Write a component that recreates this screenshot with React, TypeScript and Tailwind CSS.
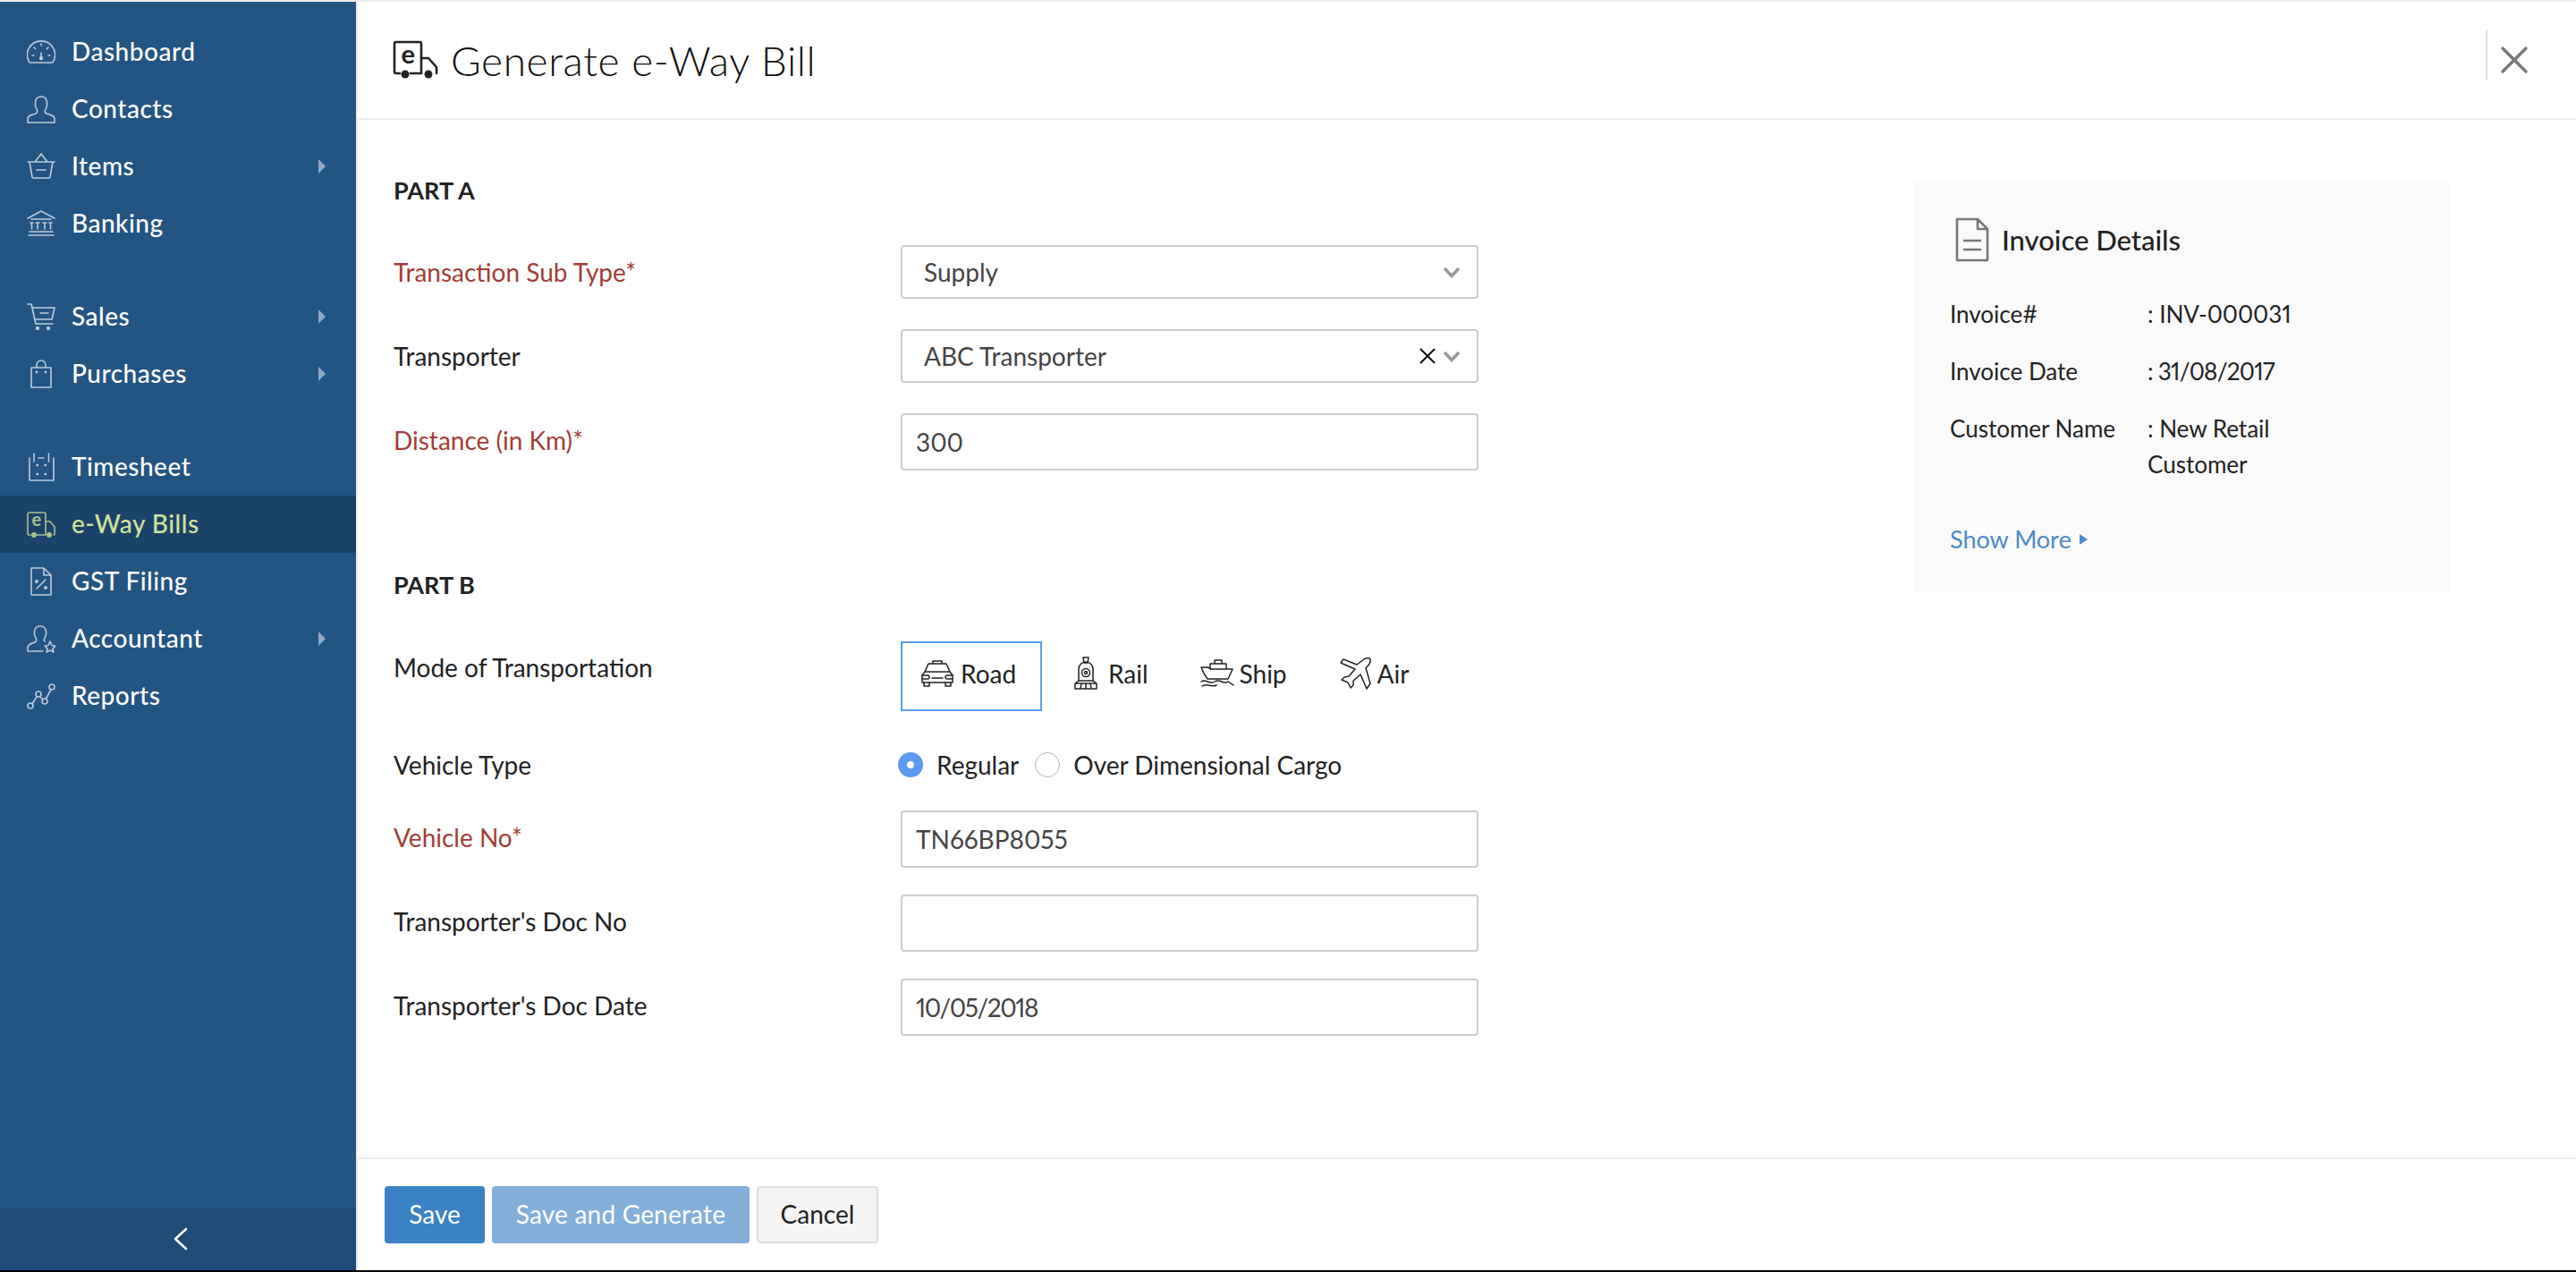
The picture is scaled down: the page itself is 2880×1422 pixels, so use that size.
import type { ReactNode } from "react";

const sb = { fill: "none", stroke: "currentColor", strokeWidth: 1.6, strokeLinecap: "round", strokeLinejoin: "round" } as const;

function Svg({ w = 32, h = 32, className = "", children }: { w?: number; h?: number; className?: string; children: ReactNode }) {
    return (
        <svg width={w} height={h} viewBox={`0 0 ${w} ${h}`} className={className} {...sb}>
            {children}
        </svg>
    );
}

const navIcons: Record<string, ReactNode> = {
    Dashboard: (
        <Svg>
            <path d="M4 28 a2 2 0 0 1 -1.5 -1 a15.5 15.5 0 1 1 27 0 a2 2 0 0 1 -1.5 1 Z" />
            <path d="M16 17 V23 M16 7 V9 M8 11 L9.5 12.5 M24 11 L22.5 12.5 M6 20 H8 M24 20 H26" />
            <circle cx="16" cy="23" r="1.4" fill="currentColor" />
        </Svg>
    ),
    Contacts: (
        <Svg>
            <path d="M1 31 V27 C1 23 6 22 10 21 C12 20 12 18 11 16 C9 13 9 10 10 6 C11 3 13 2 16 2 C19 2 21 3 22 6 C23 10 23 13 21 16 C20 18 20 20 22 21 C26 22 31 23 31 27 V31 Z" />
        </Svg>
    ),
    Items: (
        <Svg>
            <path d="M1 11 H31 M3 11 L6 28 a2 2 0 0 0 2 1 H24 a2 2 0 0 0 2 -1 L29 11 M9 11 L16 2 L23 11 M11 20 H21" />
        </Svg>
    ),
    Banking: (
        <Svg>
            <path d="M1 10 L16 2 L31 10 M5 11 H27 M10 15 H14 M12 15 V22 M18 15 H22 M20 15 V22 M4 15 H7 M5.5 15 V22 M25 15 H28 M26.5 15 V22 M3 25 H29 M2 29 H30" />
        </Svg>
    ),
    Sales: (
        <Svg>
            <path d="M1 2 H5 L10 24 H29 M6 6 H31 L28 19 H9 M15 12 H24" />
            <circle cx="12" cy="29" r="2.2" fill="currentColor" stroke="none" />
            <circle cx="24" cy="29" r="2.2" fill="currentColor" stroke="none" />
        </Svg>
    ),
    Purchases: (
        <Svg>
            <path d="M5 9 H27 V31 H5 Z M11 9 V6 a5 5 0 0 1 10 0 V9" />
            <circle cx="11" cy="14" r="0.6" fill="currentColor" />
            <circle cx="21" cy="14" r="0.6" fill="currentColor" />
        </Svg>
    ),
    Timesheet: (
        <Svg>
            <path d="M3 6 V31 H30 V6 M8 1 V10 M24.5 1 V10 M13 6 H19" />
            <path d="M11.5 14 H12 M20.5 14 H21 M11.5 24 H12 M20.5 24 H21" strokeWidth="2.6" />
        </Svg>
    ),
    "e-Way Bills": (
        <Svg className="overflow-visible">
            <path d="M4 28 H2.5 a1.5 1.5 0 0 1 -1.5 -1.5 V5 a2 2 0 0 1 2 -2 H19 a2 2 0 0 1 2 2 V28 H11" />
            <path d="M21 13 H26 L31 19 V27 a1 1 0 0 1 -1 1" />
            <circle cx="8" cy="28" r="3" fill="currentColor" stroke="none" />
            <circle cx="25" cy="28" r="3" fill="currentColor" stroke="none" />
            <text x="5.5" y="18" fontSize="20" fontWeight="700" fill="currentColor" stroke="none" fontFamily="Lato, sans-serif">e</text>
        </Svg>
    ),
    "GST Filing": (
        <Svg>
            <path d="M5 1 H19 L27 9 V31 H5 Z M19 1 V9 H27" />
            <path d="M11 24 L21 14" />
            <circle cx="11" cy="16" r="1.2" fill="currentColor" />
            <circle cx="21" cy="23" r="1.2" fill="currentColor" />
        </Svg>
    ),
    Accountant: (
        <Svg>
            <path d="M1 30 V26 C1 22 6 21 9 20 C11 19 11 17 10 15 C8 12 8 9 9 6 C10 3 12 2 15 2 C18 2 20 3 21 6 C22 9 22 12 20 15 C19 17 19 18 20 19 M1 30 H18" />
            <path d="M26 19 L28 23.5 L32 24 L29 27 L30 31 L26 29 L22 31 L23 27 L20 24 L24 23.5 Z" />
        </Svg>
    ),
    Reports: (
        <Svg>
            <circle cx="4" cy="27" r="3" />
            <circle cx="13" cy="14" r="3" />
            <circle cx="20" cy="22" r="3" />
            <circle cx="28" cy="6" r="3" />
            <path d="M6 25 L11 17 M15 17 L18 20 M21.5 19 L27 9" />
        </Svg>
    ),
};

const groups = [
    [["Dashboard"], ["Contacts"], ["Items", true], ["Banking"]],
    [["Sales", true], ["Purchases", true]],
    [["Timesheet"], ["e-Way Bills"], ["GST Filing"], ["Accountant", true], ["Reports"]],
] as [string, boolean?][][];

function NavRow({ label, caret }: { label: string; caret?: boolean }) {
    const active = label === "e-Way Bills";
    return (
        <div className={`h-16 flex items-center pl-[30px] pr-[34px] ${active ? "bg-[#1b4369]" : ""}`}>
            <span className={active ? "text-[#a9c08f]" : "text-[#bccbd9]"}>{navIcons[label]}</span>
            <span className={`ml-[18px] pb-[3px] flex-1 text-[28px] font-medium tracking-[0.5px] ${active ? "text-[#cfe29d]" : "text-white"}`}>{label}</span>
            {caret && <span className="border-y-[8px] border-y-transparent border-l-[8px] border-l-[#8fa9c1]" />}
        </div>
    );
}

function Sidebar() {
    return (
        <aside className="w-[400px] shrink-0 flex flex-col bg-[#235583] border-r-2 border-[#eeeeee]">
            <nav className="flex-1 pt-6 flex flex-col gap-10">
                {groups.map((group, i) => (
                    <div key={i}>
                        {group.map(([label, caret]) => (
                            <NavRow key={label} label={label} caret={caret} />
                        ))}
                    </div>
                ))}
            </nav>
            <div className="h-[70px] bg-[#1e4c77] flex items-center justify-center pl-[6px]">
                <svg width="16" height="26" viewBox="0 0 16 26" fill="none" stroke="white" strokeWidth="2.6" strokeLinecap="round" strokeLinejoin="round">
                    <path d="M14 2 L2 13 L14 24" />
                </svg>
            </div>
        </aside>
    );
}

function Header() {
    return (
        <header className="h-[130px] shrink-0 box-content border-b-2 border-[#eeeeee] flex items-center pl-10 pr-[53px]">
            <svg width="50" height="44" viewBox="0 0 50 44" fill="none" stroke="#222" strokeWidth="2.6" strokeLinecap="round" strokeLinejoin="round" className="mt-[2px] overflow-visible">
                <path d="M7 36 H3 a2 2 0 0 1 -2 -2 V3 a2 2 0 0 1 2 -2 H29 a2 2 0 0 1 2 2 V36 H19" />
                <path d="M31 19 H39 L48 29 V36" />
                <circle cx="13" cy="37" r="4.5" fill="#222" stroke="none" />
                <circle cx="39" cy="37" r="4.5" fill="#222" stroke="none" />
                <text x="8.5" y="25" fontSize="29" fontWeight="700" fill="#222" stroke="none" fontFamily="Lato, sans-serif">e</text>
            </svg>
            <h1 className="ml-[14px] flex-1 text-[46px] font-light text-[#111111] tracking-[0.6px]">Generate e-Way Bill</h1>
            <div className="h-14 w-[2px] bg-[#dddddd] mb-[10px]" />
            <svg width="32" height="32" viewBox="0 0 32 32" stroke="#777" strokeWidth="3.4" strokeLinecap="round" className="ml-[14px]">
                <path d="M3 3 L29 29 M29 3 L3 29" />
            </svg>
        </header>
    );
}

function Chevron() {
    return (
        <svg width="20" height="13" viewBox="0 0 20 13" fill="none" stroke="#999" strokeWidth="3.6">
            <path d="M2 2 L10 10.5 L18 2" />
        </svg>
    );
}

function FormRow({ label, required, children }: { label: string; required?: boolean; children: ReactNode }) {
    return (
        <div className="flex items-start h-[94px]">
            <label className={`w-[567px] shrink-0 leading-[60px] text-[28px] ${required ? "text-[#a33c36]" : "text-[#222222]"}`}>
                {label}
                {required && "*"}
            </label>
            {children}
        </div>
    );
}

function Field({ value, className = "" }: { value?: string; className?: string }) {
    return (
        <div className={`w-[646px] h-16 border-2 border-[#cccccc] rounded bg-white flex items-center pl-[15px] text-[28px] text-[#444444] proportional-nums ${className}`}>
            {value}
        </div>
    );
}

function SelectBox({ value, clearable }: { value: string; clearable?: boolean }) {
    return (
        <div className="w-[646px] h-[60px] border-2 border-[#cccccc] rounded bg-white flex items-center pl-6 pr-[18px] text-[28px] text-[#444444]">
            <span className="flex-1">{value}</span>
            {clearable && (
                <svg width="18" height="18" viewBox="0 0 18 18" stroke="#111" strokeWidth="2" className="mr-2">
                    <path d="M1 1 L17 17 M17 1 L1 17" />
                </svg>
            )}
            <Chevron />
        </div>
    );
}

const iconLine = { fill: "none", stroke: "#222", strokeWidth: 1.5, strokeLinecap: "round", strokeLinejoin: "round" } as const;

const modeIcons: Record<string, ReactNode> = {
    Road: (
        <svg width="38" height="32" viewBox="0 0 38 32" {...iconLine}>
            <path d="M14 5 V2 H24 V5 M9 5 H29 L33 14 H5 Z M5 14 L2 18 V26 H36 V18 L33 14 M13 21 H25" />
            <path d="M2 18 H8 a2 2 0 0 1 0 4 H2 M36 18 H30 a2 2 0 0 0 0 4 H36 M4 26 V30 H10 V26 M28 26 V30 H34 V26" />
        </svg>
    ),
    Rail: (
        <svg width="26" height="38" viewBox="0 0 26 38" {...iconLine}>
            <path d="M10 1 H16 L15 7 H11 Z" />
            <path d="M5 27 V14 a8 8 0 0 1 16 0 V27 Z" />
            <circle cx="13" cy="18" r="4.5" />
            <circle cx="13" cy="18" r="1.5" />
            <path d="M5 27 L1 30 L1 36 H25 L25 30 L21 27 M1 30 H25 M8 30 L7 36 M13 30 V36 M18 30 L19 36" />
        </svg>
    ),
    Ship: (
        <svg width="38" height="32" viewBox="0 0 38 32" {...iconLine}>
            <path d="M16 5 V1 H24 V5 M11 11 V5 H29 V11 M1 9 H8 L12 11 H36 L31 22 H8 L4 16 Z" />
            <path d="M1 25 C6 21 10 29 16 25 C22 21 26 29 31 25 L37 29 M2 30 C8 26 12 32 18 29" />
        </svg>
    ),
    Air: (
        <svg width="36" height="36" viewBox="0 0 36 36" {...iconLine}>
            <path d="M1 6 L4 2 L19 8 L27 2 C30 0 35 0 34 4 C34 7 32 9 29 12 L34 29 L30 35 L23 19 L15 26 L15 31 L12 34 L9 28 L2 25 L5 22 L10 21 L17 13 Z" />
        </svg>
    ),
};

function Mode({ name, selected, className = "" }: { name: string; selected?: boolean; className?: string }) {
    return (
        <div className={`flex items-center h-[78px] pb-[6px] text-[28px] text-[#222222] ${selected ? "w-[158px] pl-5 border-2 border-[#5a9bef]" : ""} ${className}`}>
            {modeIcons[name]}
            <span>{name}</span>
        </div>
    );
}

function Radio({ label, checked }: { label: string; checked?: boolean }) {
    return (
        <div className="flex items-center text-[28px] leading-[28px] text-[#222222]">
            {checked ? (
                <span className="w-7 h-7 rounded-full bg-[#5a9bef] flex items-center justify-center">
                    <span className="w-2 h-2 rounded-full bg-white" />
                </span>
            ) : (
                <span className="w-7 h-7 rounded-full border-[1.5px] border-[#b5b5b5] bg-white" />
            )}
            <span className="ml-[15px]">{label}</span>
        </div>
    );
}

function InvoicePanel() {
    const rows = [
        ["Invoice#", "INV-000031", ""],
        ["Invoice Date", "31/08/2017", "tracking-[-0.7px]"],
    ];
    return (
        <div className="w-[600px] h-[461px] bg-[#fafafa] pt-10 pl-10 mt-[68px]">
            <div className="flex items-center pl-[6px] h-[52px]">
                <svg width="38" height="50" viewBox="0 0 38 50" fill="none" stroke="#777" strokeWidth="2.6" strokeLinejoin="round">
                    <path d="M2 2 H25 L36 13 V48 H2 Z M25 2 V13 H36 M9 26 H29 M9 36 H29" />
                </svg>
                <span className="ml-[14px] text-[31px] font-medium text-[#222222]">Invoice Details</span>
            </div>
            <div className="mt-[25px] text-[26px] text-[#222222] proportional-nums">
                {rows.map(([k, v, extra]) => (
                    <div key={k} className="flex h-16 items-center">
                        <span className="w-[221px]">{k}</span>
                        <span className={extra}>: {v}</span>
                    </div>
                ))}
                <div className="flex pt-3 leading-[40px]">
                    <span className="w-[221px]">Customer Name</span>
                    <span className="w-[200px]">: New Retail Customer</span>
                </div>
            </div>
            <div className="mt-[44px] flex items-center text-[27px] text-[#4a8bcb]">
                Show More
                <span className="ml-[9px] border-y-[6px] border-y-transparent border-l-[9px] border-l-[#4a8bcb]" />
            </div>
        </div>
    );
}

function Footer() {
    return (
        <footer className="h-[126px] shrink-0 border-t-2 border-[#eeeeee] shadow-[0_-2px_4px_rgba(0,0,0,0.05)] flex items-start pt-[30px] pl-[30px] text-[28px]">
            <button className="w-[112px] h-16 pb-[2px] rounded bg-[#3a82c4] text-white">Save</button>
            <button className="ml-2 w-[288px] h-16 pb-[2px] rounded bg-[#82afda] text-white tracking-[0.2px]">Save and Generate</button>
            <button className="ml-2 w-[136px] h-16 pb-[2px] rounded bg-[#f4f4f4] border-2 border-[#dedede] text-[#222222]">Cancel</button>
        </footer>
    );
}

export default function App() {
    return (
        <div className="h-[1422px] flex flex-col bg-white overflow-hidden font-['Lato',sans-serif]">
            <div className="h-[2px] shrink-0 bg-[#eeeeee]" />
            <div className="flex-1 flex min-h-0">
                <Sidebar />
                <main className="flex-1 flex flex-col min-w-0">
                    <Header />
                    <div className="flex-1 flex pl-10">
                        <div className="w-[1700px] shrink-0">
                            <h2 className="mt-[51px] text-[27px] font-bold text-[#222222] leading-[56px]">PART A</h2>
                            <div className="mt-[33px]">
                                <FormRow label="Transaction Sub Type" required>
                                    <SelectBox value="Supply" />
                                </FormRow>
                                <FormRow label="Transporter">
                                    <SelectBox value="ABC Transporter" clearable />
                                </FormRow>
                                <FormRow label="Distance (in Km)" required>
                                    <Field value="300" />
                                </FormRow>
                            </div>
                            <h2 className="mt-[70px] text-[27px] font-bold text-[#222222] leading-[56px]">PART B</h2>
                            <div className="mt-[35px] flex h-[124px] items-start">
                                <label className="w-[567px] shrink-0 text-[28px] text-[#222222] leading-[58px]">Mode of Transportation</label>
                                <Mode name="Road" selected className="gap-[7px]" />
                                <Mode name="Rail" className="ml-9 gap-3" />
                                <Mode name="Ship" className="ml-[58px] gap-[6px]" />
                                <Mode name="Air" className="ml-[59px] gap-[6px]" />
                            </div>
                            <div className="flex h-[65px] items-start">
                                <label className="w-[564px] shrink-0 text-[28px] text-[#222222] leading-[28px]">Vehicle Type</label>
                                <div className="flex gap-[18px]">
                                    <Radio label="Regular" checked />
                                    <Radio label="Over Dimensional Cargo" />
                                </div>
                            </div>
                            <FormRow label="Vehicle No" required>
                                <Field value="TN66BP8055" />
                            </FormRow>
                            <FormRow label="Transporter's Doc No">
                                <Field />
                            </FormRow>
                            <FormRow label="Transporter's Doc Date">
                                <Field value="10/05/2018" className="tracking-[-1.4px]" />
                            </FormRow>
                        </div>
                        <InvoicePanel />
                    </div>
                    <Footer />
                </main>
            </div>
            <div className="h-[2px] shrink-0 bg-black" />
        </div>
    );
}
